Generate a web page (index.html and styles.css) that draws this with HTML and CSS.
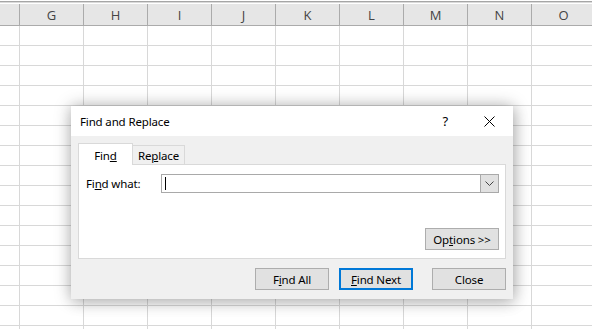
FILE: index.html
```html
<!DOCTYPE html>
<html>
<head>
<meta charset="utf-8">
<link rel="stylesheet" href="styles.css">
</head>
<body>
<div class="sheet">
  <div class="topline"></div>
  <div class="colhead">
    <div class="ch first"></div>
    <div class="ch">G</div>
    <div class="ch">H</div>
    <div class="ch">I</div>
    <div class="ch">J</div>
    <div class="ch">K</div>
    <div class="ch">L</div>
    <div class="ch">M</div>
    <div class="ch">N</div>
    <div class="ch last">O</div>
  </div>
  <div class="grid"></div>
</div>

<div class="dialog">
  <div class="titlebar">
    <span class="title">Find and Replace</span>
    <span class="help">?</span>
    <svg class="close" width="11" height="11" viewBox="0 0 11 11"><path d="M0.5 0.5 L10.5 10.5 M10.5 0.5 L0.5 10.5" stroke="#000" stroke-width="1" fill="none"/></svg>
  </div>
  <div class="dbody">
    <div class="tabs">
      <div class="tab active">Fin<u>d</u></div>
      <div class="tab">Re<u>p</u>lace</div>
    </div>
    <div class="panel">
      <div class="findrow">
        <label class="lbl">Fi<u>n</u>d what:</label>
        <div class="combo">
          <div class="field"><span class="caret"></span></div>
          <div class="drop"><svg width="9" height="5" viewBox="0 0 9 5"><path d="M0.5 0.5 L4.5 4.5 L8.5 0.5" stroke="#444" stroke-width="1" fill="none"/></svg></div>
        </div>
      </div>
      <div class="optrow">
        <button class="btn">Op<u>t</u>ions &gt;&gt;</button>
      </div>
    </div>
    <div class="btnrow">
      <button class="btn">F<u>i</u>nd All</button>
      <button class="btn default"><u>F</u>ind Next</button>
      <button class="btn close-btn">Close</button>
    </div>
  </div>
</div>
</body>
</html>
```

FILE: styles.css
```css
html, body {
  margin: 0;
  padding: 0;
  width: 592px;
  height: 329px;
  overflow: hidden;
  background: #ffffff;
  font-family: "Noto Sans", "Open Sans", sans-serif;
}

.sheet {
  width: 592px;
  height: 329px;
  display: flex;
  flex-direction: column;
}

.topline {
  height: 1px;
  margin-top: 1px;
  background: #a6a6a6;
  border-bottom: 1px solid #dadada;
  margin-bottom: 1px;
}

.colhead {
  display: flex;
  height: 21px;
  background: #e6e6e6;
  border-bottom: 1px solid #ababab;
  flex: none;
}

.ch {
  width: 63px;
  flex: none;
  border-right: 1px solid #ababab;
  display: flex;
  align-items: center;
  justify-content: center;
  font-family: "Open Sans", "Noto Sans", sans-serif;
  font-size: 13px;
  color: #444444;
  padding-top: 1px;
  box-sizing: content-box;
}

.ch.first {
  width: 19px;
}

.ch.last {
  border-right: none;
}

.grid {
  flex: 1;
  background-image:
    linear-gradient(to bottom, transparent 19px, #d8d8d8 19px, #d8d8d8 20px),
    linear-gradient(to right, transparent 63px, #d8d8d8 63px, #d8d8d8 64px);
  background-size: 100% 20px, 64px 100%;
  background-position: 0 0, 20px 0;
}

.dialog {
  position: absolute;
  left: 71px;
  top: 106px;
  width: 442px;
  height: 193px;
  background: #f0f0f0;
  box-shadow: 0 0 16px rgba(0, 0, 0, 0.28), 2px 4px 14px rgba(0, 0, 0, 0.14);
  display: flex;
  flex-direction: column;
  font-size: 11.5px;
  letter-spacing: -0.15px;
  color: #000;
}

.titlebar {
  height: 30px;
  background: #ffffff;
  display: flex;
  align-items: center;
  padding-left: 9px;
  padding-right: 18px;
  flex: none;
}

.title {
  flex: 1;
  font-size: 11.5px;
}

.help {
  font-size: 13px;
  margin-right: 36px;
}

.close {
  display: block;
}

.dbody {
  flex: 1;
  padding: 7px 7px 9px 7px;
  display: flex;
  flex-direction: column;
}

.tabs {
  display: flex;
  align-items: flex-end;
  height: 21px;
  flex: none;
}

.tab {
  height: 19px;
  box-sizing: border-box;
  width: 52px;
  border: 1px solid #d9d9d9;
  border-bottom: none;
  border-left: none;
  background: #f0f0f0;
  display: flex;
  align-items: center;
  justify-content: center;
  padding-top: 1px;
}

.tab.active {
  height: 22px;
  width: 55px;
  background: #ffffff;
  border-left: 1px solid #d9d9d9;
  margin-bottom: -1px;
  position: relative;
  z-index: 1;
  padding-top: 2px;
}

.panel {
  height: 95px;
  box-sizing: border-box;
  background: #ffffff;
  border: 1px solid #d9d9d9;
  display: flex;
  flex-direction: column;
  padding: 9px 6px 8px 7px;
  flex: none;
}

.findrow {
  display: flex;
  align-items: center;
  height: 19px;
}

.lbl {
  width: 75px;
  flex: none;
}

.combo {
  flex: 1;
  display: flex;
  height: 19px;
  box-sizing: border-box;
  border: 1px solid #a9a9a9;
}

.field {
  flex: 1;
  display: flex;
  align-items: center;
  padding-left: 3px;
}

.caret {
  width: 1px;
  height: 13px;
  background: #000;
}

.drop {
  width: 17px;
  background: #e1e1e1;
  border-left: 1px solid #a9a9a9;
  display: flex;
  align-items: center;
  justify-content: center;
}

.optrow {
  margin-top: auto;
  display: flex;
  justify-content: flex-end;
}

.btn {
  width: 74px;
  height: 22px;
  box-sizing: border-box;
  background: #e1e1e1;
  border: 1px solid #adadad;
  font-family: "Noto Sans", "Open Sans", sans-serif;
  font-size: 11.5px;
  letter-spacing: -0.15px;
  color: #000;
  padding: 0;
  margin: 0;
  display: flex;
  align-items: center;
  justify-content: center;
}

.btn.default {
  border: 2px solid #0078d7;
}

.btnrow {
  margin-top: auto;
  display: flex;
  justify-content: flex-end;
  gap: 10px;
}

.btnrow .close-btn {
  margin-left: 9px;
}

u {
  text-decoration: underline;
  text-underline-offset: 1px;
}
```
